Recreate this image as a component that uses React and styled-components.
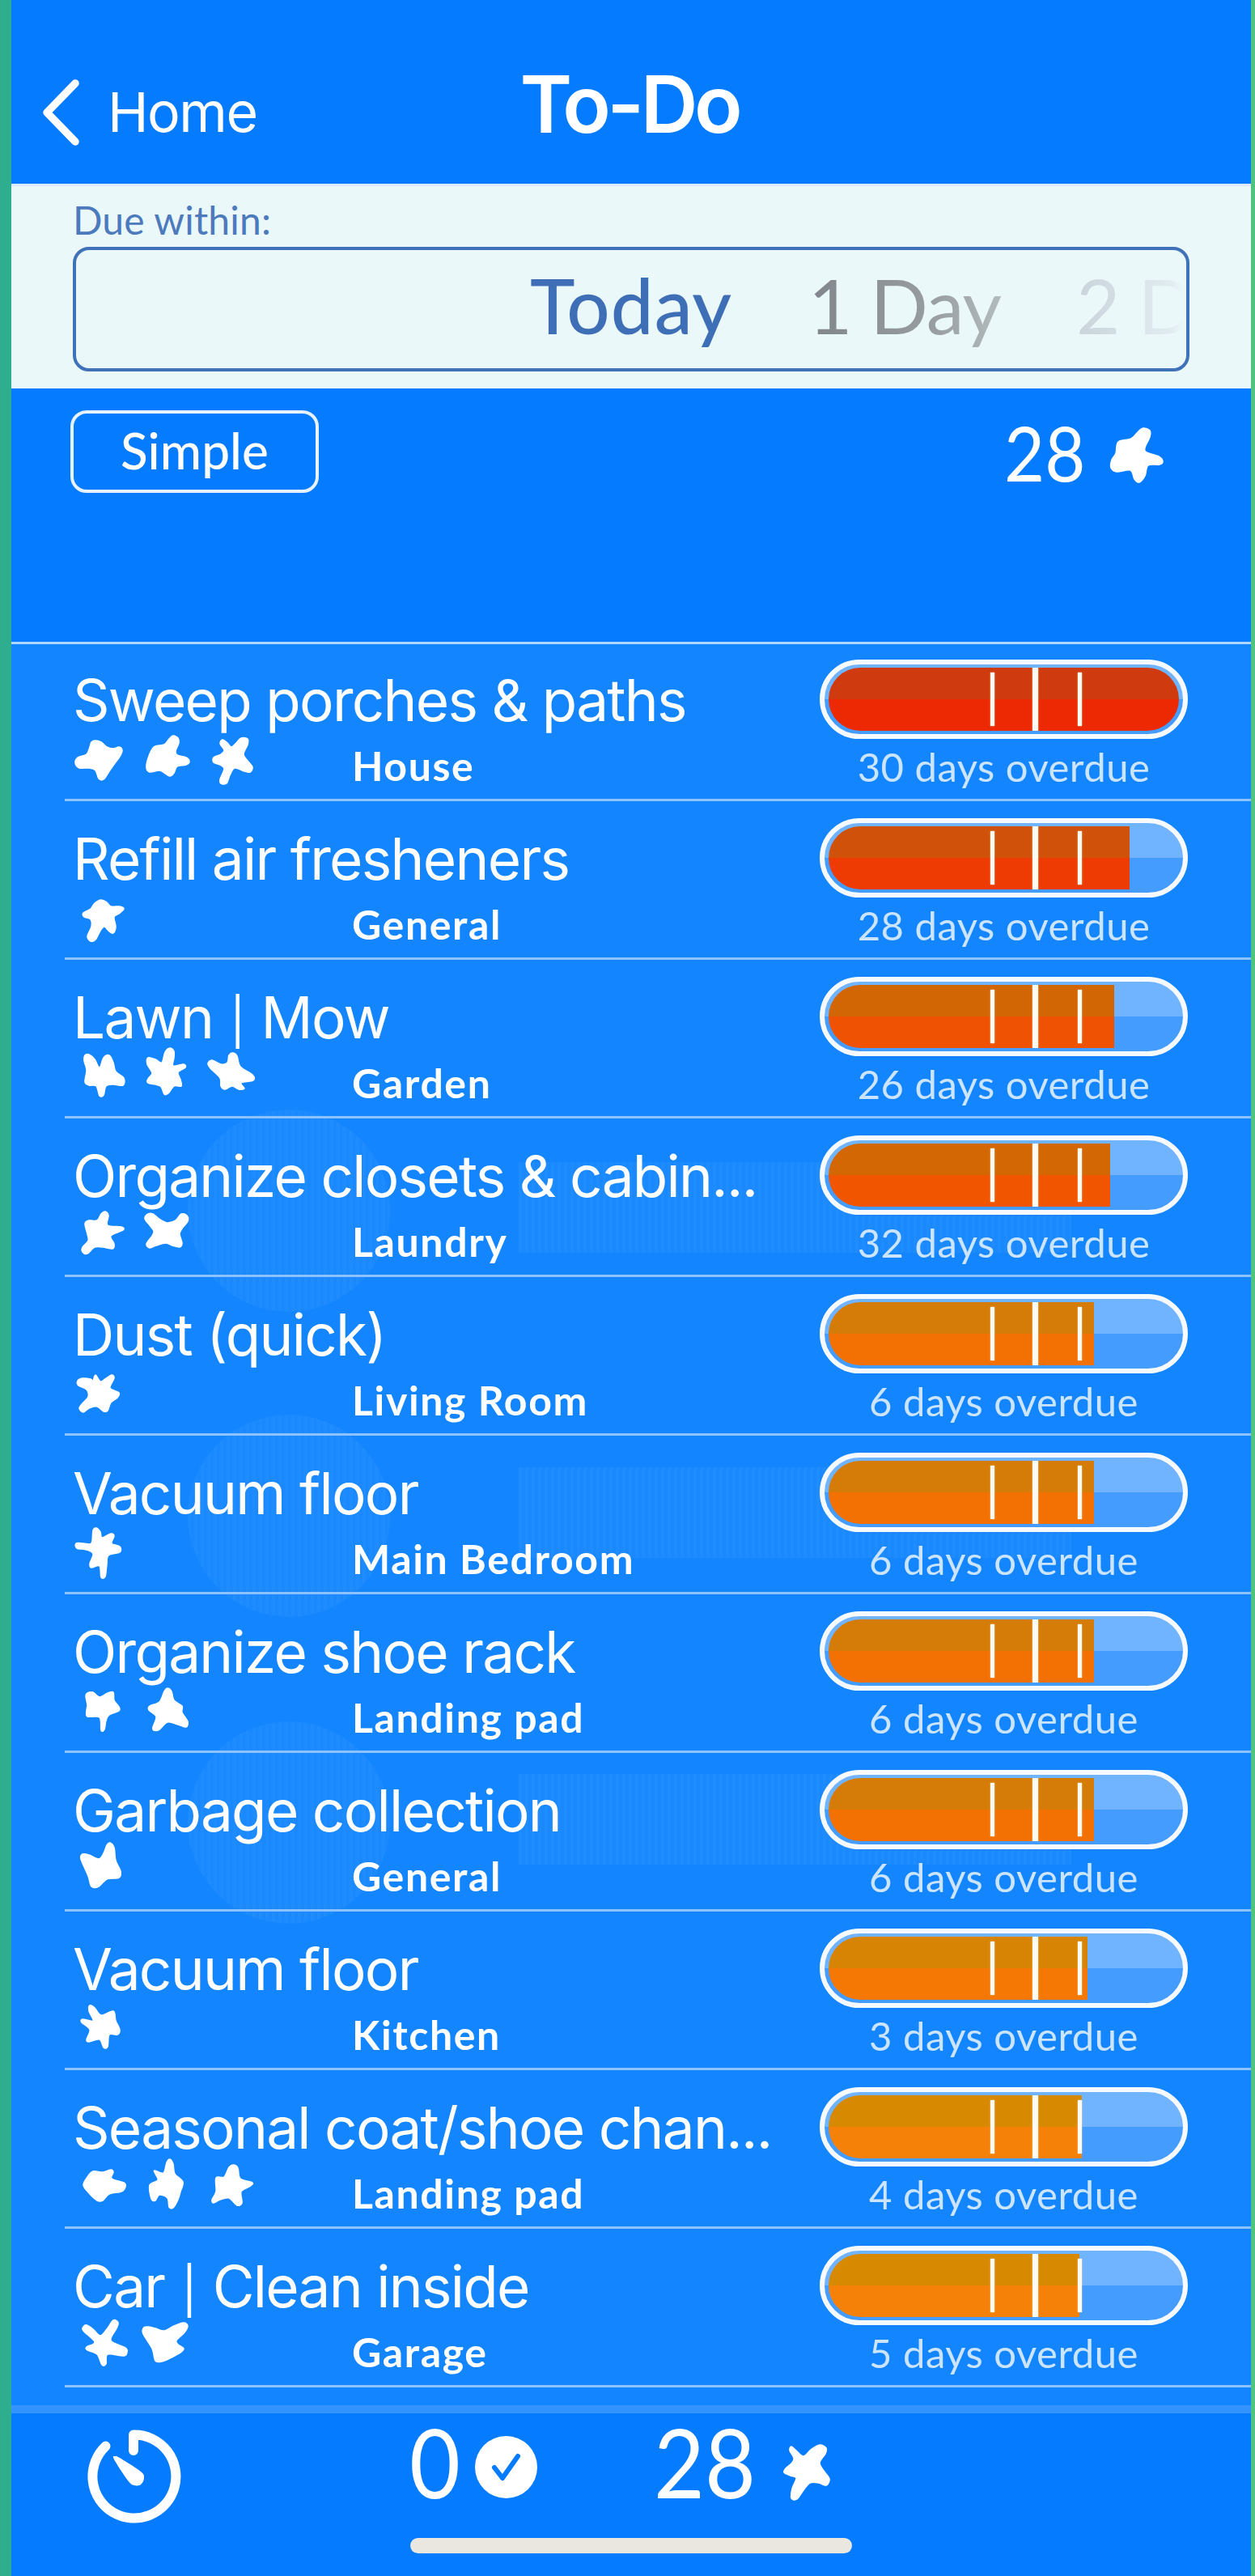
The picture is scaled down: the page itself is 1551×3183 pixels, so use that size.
import React from "react";
import styled, { createGlobalStyle } from "styled-components";

const SYSTEM = `Inter, "Liberation Sans", sans-serif`;
const ROUND = `Lato, "Liberation Sans", sans-serif`;

const GlobalStyle = createGlobalStyle`
  *, *::before, *::after { box-sizing: border-box; }
  body { margin: 0; background: #2fae8f; }
`;

const Backdrop = styled.div`
  width: 1551px;
  height: 3183px;
  padding: 0 5px 0 14px;
  overflow: hidden;
  background: linear-gradient(90deg, #2fae8f 0%, #2fae8f 2%, #4fc37f 98%);
`;

const Screen = styled.main`
  display: flex;
  flex-direction: column;
  height: 3183px;
  background: #057bff;
  color: #fff;
  font-family: ${ROUND};
`;

/* Navigation bar */

const NavBar = styled.header`
  display: grid;
  grid-template-columns: 1fr auto 1fr;
  align-items: start;
  height: 227px;
  flex: none;
`;

const BackLink = styled.div`
  display: flex;
  align-items: center;
  gap: 34px;
  margin-top: 98px;
  padding-left: 37px;
  height: 80px;
  font: 400 68px/80px ${SYSTEM};
  letter-spacing: -1.5px;
`;

const Title = styled.h1`
  margin: 79px 4px 0 0;
  font: 600 98px/100px ${SYSTEM};
  letter-spacing: -4.4px;
`;

/* Due-within picker */

const DuePanel = styled.section`
  flex: none;
  height: 253px;
  padding: 15px 76px 0;
  border-top: 3px solid #dcebff;
  background: #ebf8fa;
`;

const DueLabel = styled.div`
  font-size: 48px;
  line-height: 54px;
  letter-spacing: 0.2px;
  color: #4c7abc;
`;

const Picker = styled.div`
  display: flex;
  align-items: center;
  height: 154px;
  margin-top: 6px;
  padding: 0 0 11px 561px;
  border: 4px solid #3f72b8;
  border-radius: 20px;
  overflow: hidden;
  white-space: nowrap;
`;

const Option = styled.span`
  flex: none;
  width: ${(p) => p.$width}px;
  font-size: 94px;
  line-height: 110px;
  font-weight: ${(p) => (p.$active ? 500 : 400)};
  letter-spacing: ${(p) => (p.$active ? 1 : -1)}px;
  color: transparent;
  background: ${(p) => p.$ink};
  background-clip: text;
  -webkit-background-clip: text;
`;

/* Summary */

const Summary = styled.section`
  position: relative;
  z-index: 1;
  display: flex;
  justify-content: space-between;
  align-items: flex-start;
  flex: none;
  height: 316px;
  padding: 27px 110px 0 73px;
  border-bottom: 3px solid #b0d5ff;
`;

const ModeButton = styled.button`
  width: 307px;
  height: 102px;
  padding: 0 0 5px;
  border: 4px solid #e6f2ff;
  border-radius: 20px;
  background: none;
  color: #fff;
  font: 500 62px/80px ${ROUND};
  letter-spacing: 0.1px;
`;

const Count = styled.span`
  display: inline-block;
  font-size: ${(p) => p.$size}px;
  line-height: 120px;
  transform: scaleX(0.92);
  transform-origin: left;
`;

const Score = styled.div`
  display: flex;
  align-items: flex-start;
  margin-top: -8px;
  gap: 22px;
`;

const StarSlot = styled.div`
  padding-top: 29px;
`;

/* Task list */

const List = styled.ul`
  position: relative;
  flex: none;
  height: 2178px;
  margin: -2px 0 0;
  padding: 0;
  list-style: none;
  background: #1285ff;
`;

const Row = styled.li`
  position: relative;
  display: grid;
  grid-template-columns: 933px 455px;
  height: 196px;
  margin-left: 66px;
  border-bottom: 3px solid #8cc2ff;
`;

const Task = styled.div`
  padding: 31px 0 0 10px;
`;

const TaskName = styled.div`
  height: 80px;
  font: 370 71px/80px ${SYSTEM};
  letter-spacing: -1.72px;
  white-space: nowrap;
`;

const Divider = styled.span`
  margin: 0 0.05em;
  font-size: 0.8em;
  line-height: 1;
`;

const TaskMeta = styled.div`
  display: grid;
  grid-template-columns: 345px 1fr;
  margin-top: -1px;
`;

const Effort = styled.div`
  display: flex;
  gap: 21px;
  height: 60px;
  padding-left: 3px;
`;

const Room = styled.div`
  padding-top: 15px;
  font-size: 50px;
  line-height: 54px;
  font-weight: 700;
  letter-spacing: 1.6px;
  white-space: nowrap;
`;

const Status = styled.div`
  padding-top: 21px;
`;

const Capsule = styled.div`
  height: 98px;
  padding: 4px 5px;
  border: 6px solid #f6faff;
  border-radius: 50px;
  background: linear-gradient(#70b3ff 50%, #449cff 50%);
  background-origin: border-box;
`;

const Gauge = styled.div`
  position: relative;
  height: 78px;
  border-radius: 39px;
  overflow: hidden;
`;

const Fill = styled.div`
  height: 100%;
  background: linear-gradient(
    ${(p) => p.$top} 50%,
    ${(p) => p.$bottom} 50%
  );
`;

const Tick = styled.span`
  position: absolute;
  left: ${(p) => p.$x}px;
  top: ${(p) => (p.$main ? 0 : 6)}px;
  bottom: ${(p) => (p.$main ? 0 : 6)}px;
  width: ${(p) => (p.$main ? 7 : 5)}px;
  background: #fffaf2;
  box-shadow: 0 0 2px #ffd9a0;
`;

const Overdue = styled.div`
  margin-top: 7px;
  font-size: 49px;
  line-height: 54px;
  text-align: center;
  letter-spacing: 0.5px;
  color: #cbe4ff;
`;

const stripes = `repeating-linear-gradient(
  90deg,
  rgba(255, 255, 255, 0.052) 0 4px,
  rgba(255, 255, 255, 0.034) 4px 8px
)`;

const GhostDisc = styled.i`
  position: absolute;
  left: 218px;
  top: ${(p) => p.$y - 125}px;
  width: 250px;
  height: 250px;
  border-radius: 50%;
  background: ${stripes};
`;

const GhostBar = styled.i`
  position: absolute;
  left: 627px;
  top: ${(p) => p.$y - 60}px;
  width: 683px;
  height: 112px;
  background: ${stripes};
`;

/* Footer */

const Footer = styled.footer`
  flex: 1;
  border-top: 10px solid #3393ff;
`;

const FooterBar = styled.div`
  display: flex;
  align-items: flex-start;
  height: 154px;
  padding-left: 94px;
`;

const Timer = styled.div`
  width: 398px;
  padding-top: 19px;
`;

const Done = styled.div`
  display: flex;
  width: 302px;
`;

const DoneMark = styled.div`
  margin: 28px 0 0 13px;
`;

const Earned = styled.div`
  display: flex;
`;

const EarnedStar = styled.div`
  margin: 33px 0 0 23px;
`;

const HomeIndicator = styled.div`
  width: 546px;
  height: 19px;
  margin: 0 auto;
  border-radius: 10px;
  background: #eae6e0;
`;

const Svg = styled.svg`
  display: block;
  flex: none;
  overflow: visible;
`;

/* Closed curve running through every point of a hand-drawn outline. */
function blob(text) {
  const pts = text.split(" ").map((pair) => pair.split(",").map(Number));
  const n = pts.length;
  const at = (i) => pts[(i + n) % n];
  let d = `M${pts[0]}`;
  for (let i = 0; i < n; i += 1) {
    const [a, b, c, e] = [at(i - 1), at(i), at(i + 1), at(i + 2)];
    d += `C${b[0] + (c[0] - a[0]) / 6},${b[1] + (c[1] - a[1]) / 6} `;
    d += `${c[0] - (e[0] - b[0]) / 6},${c[1] - (e[1] - b[1]) / 6} ${c}`;
  }
  return `${d}Z`;
}

function Star({ outline, width = 60, height = 60 }) {
  return (
    <Svg width={width} height={height} fill="#fff" stroke="#fff" strokeWidth="1.5">
      <path d={blob(outline)} />
    </Svg>
  );
}

const STAR_TOTAL =
  "41,1 49,4 49,12 43,25 45,31 60,36 65,42 61,46 47,47 43,60 36,68 30,64 25,53 8,55 1,50 2,40 7,32 10,18 26,14 35,5";
const STAR_EARNED =
  "10,8 16,13 25,20 34,12 45,6 53,10 52,17 45,28 50,38 57,48 53,56 44,53 33,53 25,62 17,73 10,72 11,60 16,47 9,44 1,40 3,35 11,28 13,22 8,13";

const TASKS = [
  {
    name: "Sweep porches & paths", room: "House", days: 30, level: 100, top: "#cf3b0e", bottom: "#ec2903",
    stars: [
      "25,11 32,13 39,19 47,21 54,19 58,23 55,31 49,39 42,49 35,59 29,58 25,48 17,45 5,45 0,39 3,32 14,28 18,19 20,13",
      "40,5 46,8 47,14 43,24 45,29 56,32 60,37 56,41 45,43 41,51 36,55 29,51 23,48 11,50 7,45 9,33 16,19 29,16 35,9",
      "20,10 26,14 31,19 37,14 43,8 51,9 51,16 46,28 51,36 57,44 54,50 47,49 35,45 29,54 25,64 18,64 17,59 22,46 17,41 9,38 9,32 18,28 22,23 17,15",
    ],
  },
  {
    name: "Refill air fresheners", room: "General", days: 28, level: 85.9, top: "#d0520a", bottom: "#ed3b03",
    stars: ["32,12 39,15 44,20 55,20 60,23 54,29 48,33 50,45 47,53 42,51 36,45 31,50 25,61 19,63 15,57 20,45 19,36 11,33 10,28 19,23 24,16"],
  },
  {
    name: "Lawn | Mow", room: "Garden", days: 26, level: 81.5, top: "#d26604", bottom: "#f05203",
    stars: [
      "17,7 24,13 30,23 35,11 42,8 47,17 50,28 60,36 59,45 47,44 38,46 35,57 30,58 26,46 17,45 12,41 14,26 11,15 12,8",
      "36,-1 41,3 41,11 40,21 53,19 55,23 46,29 49,38 50,46 41,46 34,55 29,56 24,46 9,42 9,37 14,30 8,19 9,11 18,13 26,17 30,4",
      "33,5 38,9 42,22 57,32 58,39 43,42 47,49 40,50 32,46 23,50 18,46 17,36 5,24 2,18 7,14 18,19 26,17 28,8",
    ],
  },
  {
    name: "Organize closets & cabin...", room: "Laundry", days: 32, level: 80.3, top: "#d26703", bottom: "#f15500",
    stars: [
      "37,5 41,10 40,22 57,24 59,28 44,35 48,45 46,51 34,49 24,49 15,57 9,55 9,49 16,41 15,33 12,20 17,16 27,16 32,8",
      "9,8 15,8 24,15 33,19 43,16 50,8 57,10 58,17 51,26 48,33 51,44 48,49 39,47 31,44 19,47 11,50 7,45 14,35 16,29 11,22 5,14",
    ],
  },
  {
    name: "Dust (quick)", room: "Living Room", days: 6, level: 75.7, top: "#d47c07", bottom: "#f37003",
    stars: ["9,15 19,16 22,18 25,11 31,19 37,16 45,11 48,15 43,27 54,33 52,39 44,45 40,55 35,56 27,50 17,52 10,57 5,52 10,45 16,38 14,29 4,24 3,18"],
  },
  {
    name: "Vacuum floor", room: "Main Bedroom", days: 6, level: 75.7, top: "#d47c07", bottom: "#f37003",
    stars: ["26,4 31,9 33,16 44,11 48,14 45,23 55,27 55,34 41,38 39,49 37,64 32,65 30,51 20,53 18,48 22,36 14,31 2,29 1,23 10,23 20,23 22,7"],
  },
  {
    name: "Organize shoe rack", room: "Landing pad", days: 6, level: 75.7, top: "#d47c07", bottom: "#f37003",
    stars: [
      "15,12 22,11 30,17 40,12 47,11 48,21 54,29 54,34 42,39 38,46 36,57 32,58 30,42 15,41 14,33 15,27 13,16",
      "33,6 38,10 41,21 51,28 51,36 58,47 56,54 46,51 33,48 23,57 16,58 15,54 19,41 10,33 11,28 23,23 29,10",
    ],
  },
  {
    name: "Garbage collection", room: "General", days: 6, level: 75.7, top: "#d47c07", bottom: "#f37003",
    stars: ["43,1 48,7 50,23 56,36 54,44 39,46 29,55 20,55 16,42 7,21 9,15 17,16 29,21 35,14 39,4"],
  },
  {
    name: "Vacuum floor", room: "Kitchen", days: 3, level: 73.8, top: "#d78404", bottom: "#f47803",
    stars: ["18,6 24,9 32,18 47,13 50,25 55,36 52,42 42,42 40,57 35,58 30,48 17,51 14,48 18,36 8,27 9,23 22,25 17,13"],
  },
  {
    name: "Seasonal coat/shoe chan...", room: "Landing pad", days: 4, level: 72.2, top: "#d78902", bottom: "#f58108",
    stars: [
      "22,15 34,16 44,13 47,16 45,24 60,29 62,34 57,40 42,43 34,51 27,51 17,42 10,32 15,22",
      "36,0 40,6 42,18 52,28 49,40 46,50 40,60 35,59 33,48 23,44 18,51 13,49 11,32 21,26 18,18 17,14 28,17 32,4",
      "34,7 39,11 42,24 57,29 53,34 43,40 44,54 38,57 28,48 17,50 9,54 7,50 12,40 12,23 22,22 28,10",
    ],
  },
  {
    name: "Car | Clean inside", room: "Garage", days: 5, level: 71.6, top: "#d78902", bottom: "#f58108",
    stars: [
      "14,9 22,14 31,22 39,14 47,3 53,6 51,13 44,28 62,37 64,42 60,47 40,45 38,57 33,58 27,45 15,40 14,36 24,30 10,16 10,11",
      "8,11 18,13 29,16 41,10 53,6 58,10 54,18 44,28 46,33 53,38 49,43 38,49 26,54 18,53 14,38 3,20 3,13",
    ],
  },
];

function TaskRow({ task }) {
  const [first, rest] = task.name.split("|");
  return (
    <Row>
      <Task>
        <TaskName>
          {first}
          {rest && <Divider>|</Divider>}
          {rest}
        </TaskName>
        <TaskMeta>
          <Effort>
            {task.stars.map((outline) => (
              <Star key={outline} outline={outline} />
            ))}
          </Effort>
          <Room>{task.room}</Room>
        </TaskMeta>
      </Task>
      <Status>
        <Capsule>
          <Gauge>
            <Fill $top={task.top} $bottom={task.bottom} style={{ width: `${task.level}%` }} />
            <Tick $x={200} />
            <Tick $x={252} $main />
            <Tick $x={308} />
          </Gauge>
        </Capsule>
        <Overdue>{task.days} days overdue</Overdue>
      </Status>
    </Row>
  );
}

export default function App() {
  return (
    <Backdrop>
      <GlobalStyle />
      <Screen>
        <NavBar>
          <BackLink>
            <Svg width="48" height="82" viewBox="0 0 48 82" fill="none" stroke="#fff" strokeWidth="9.5" strokeLinecap="round" strokeLinejoin="round">
              <path d="M42 6 7 42 42 78" />
            </Svg>
            Home
          </BackLink>
          <Title>To-Do</Title>
        </NavBar>

        <DuePanel>
          <DueLabel>Due within:</DueLabel>
          <Picker>
            <Option $active $width={344} $ink="#3d6eb6">Today</Option>
            <Option $width={331} $ink="linear-gradient(90deg, #80868b, #969c9f 45%, #bcc4c6 80%)">1 Day</Option>
            <Option $width={240} $ink="linear-gradient(90deg, #c8d3da, #e2edf2 50%, transparent 55%)">2 Days</Option>
          </Picker>
        </DuePanel>

        <Summary>
          <ModeButton>Simple</ModeButton>
          <Score>
            <Count $size={94}>28</Count>
            <StarSlot>
              <Star outline={STAR_TOTAL} width={64} height={69} />
            </StarSlot>
          </Score>
        </Summary>

        <List>
          {[702, 1079, 1458].map((y) => (
            <React.Fragment key={y}>
              <GhostDisc $y={y} />
              <GhostBar $y={y} />
            </React.Fragment>
          ))}
          {TASKS.map((task, i) => (
            <TaskRow key={i} task={task} />
          ))}
        </List>

        <Footer>
          <FooterBar>
            <Timer>
              <Svg width="116" height="118" fill="none" stroke="#fff" strokeWidth="12" strokeLinecap="round" strokeLinejoin="round">
                <path d="M57 27V7.5H58A51.5 51.5 0 1 1 22.5 21.6" />
                <path d={blob("34,34 40,36 66,53 70,61 66,69 58,70 50,64 33,38")} fill="#fff" stroke="none" />
              </Svg>
            </Timer>
            <Done>
              <Count $size={118}>0</Count>
              <DoneMark>
                <Svg width="77" height="77" fill="none">
                  <circle cx="38.5" cy="38.5" r="38.5" fill="#fff" />
                  <path d="M24 39 34 52 53 25" stroke="#057bff" strokeWidth="6" strokeLinecap="round" strokeLinejoin="round" />
                </Svg>
              </DoneMark>
            </Done>
            <Earned>
              <Count $size={118}>28</Count>
              <EarnedStar>
                <Star outline={STAR_EARNED} width={58} height={75} />
              </EarnedStar>
            </Earned>
          </FooterBar>
          <HomeIndicator />
        </Footer>
      </Screen>
    </Backdrop>
  );
}
